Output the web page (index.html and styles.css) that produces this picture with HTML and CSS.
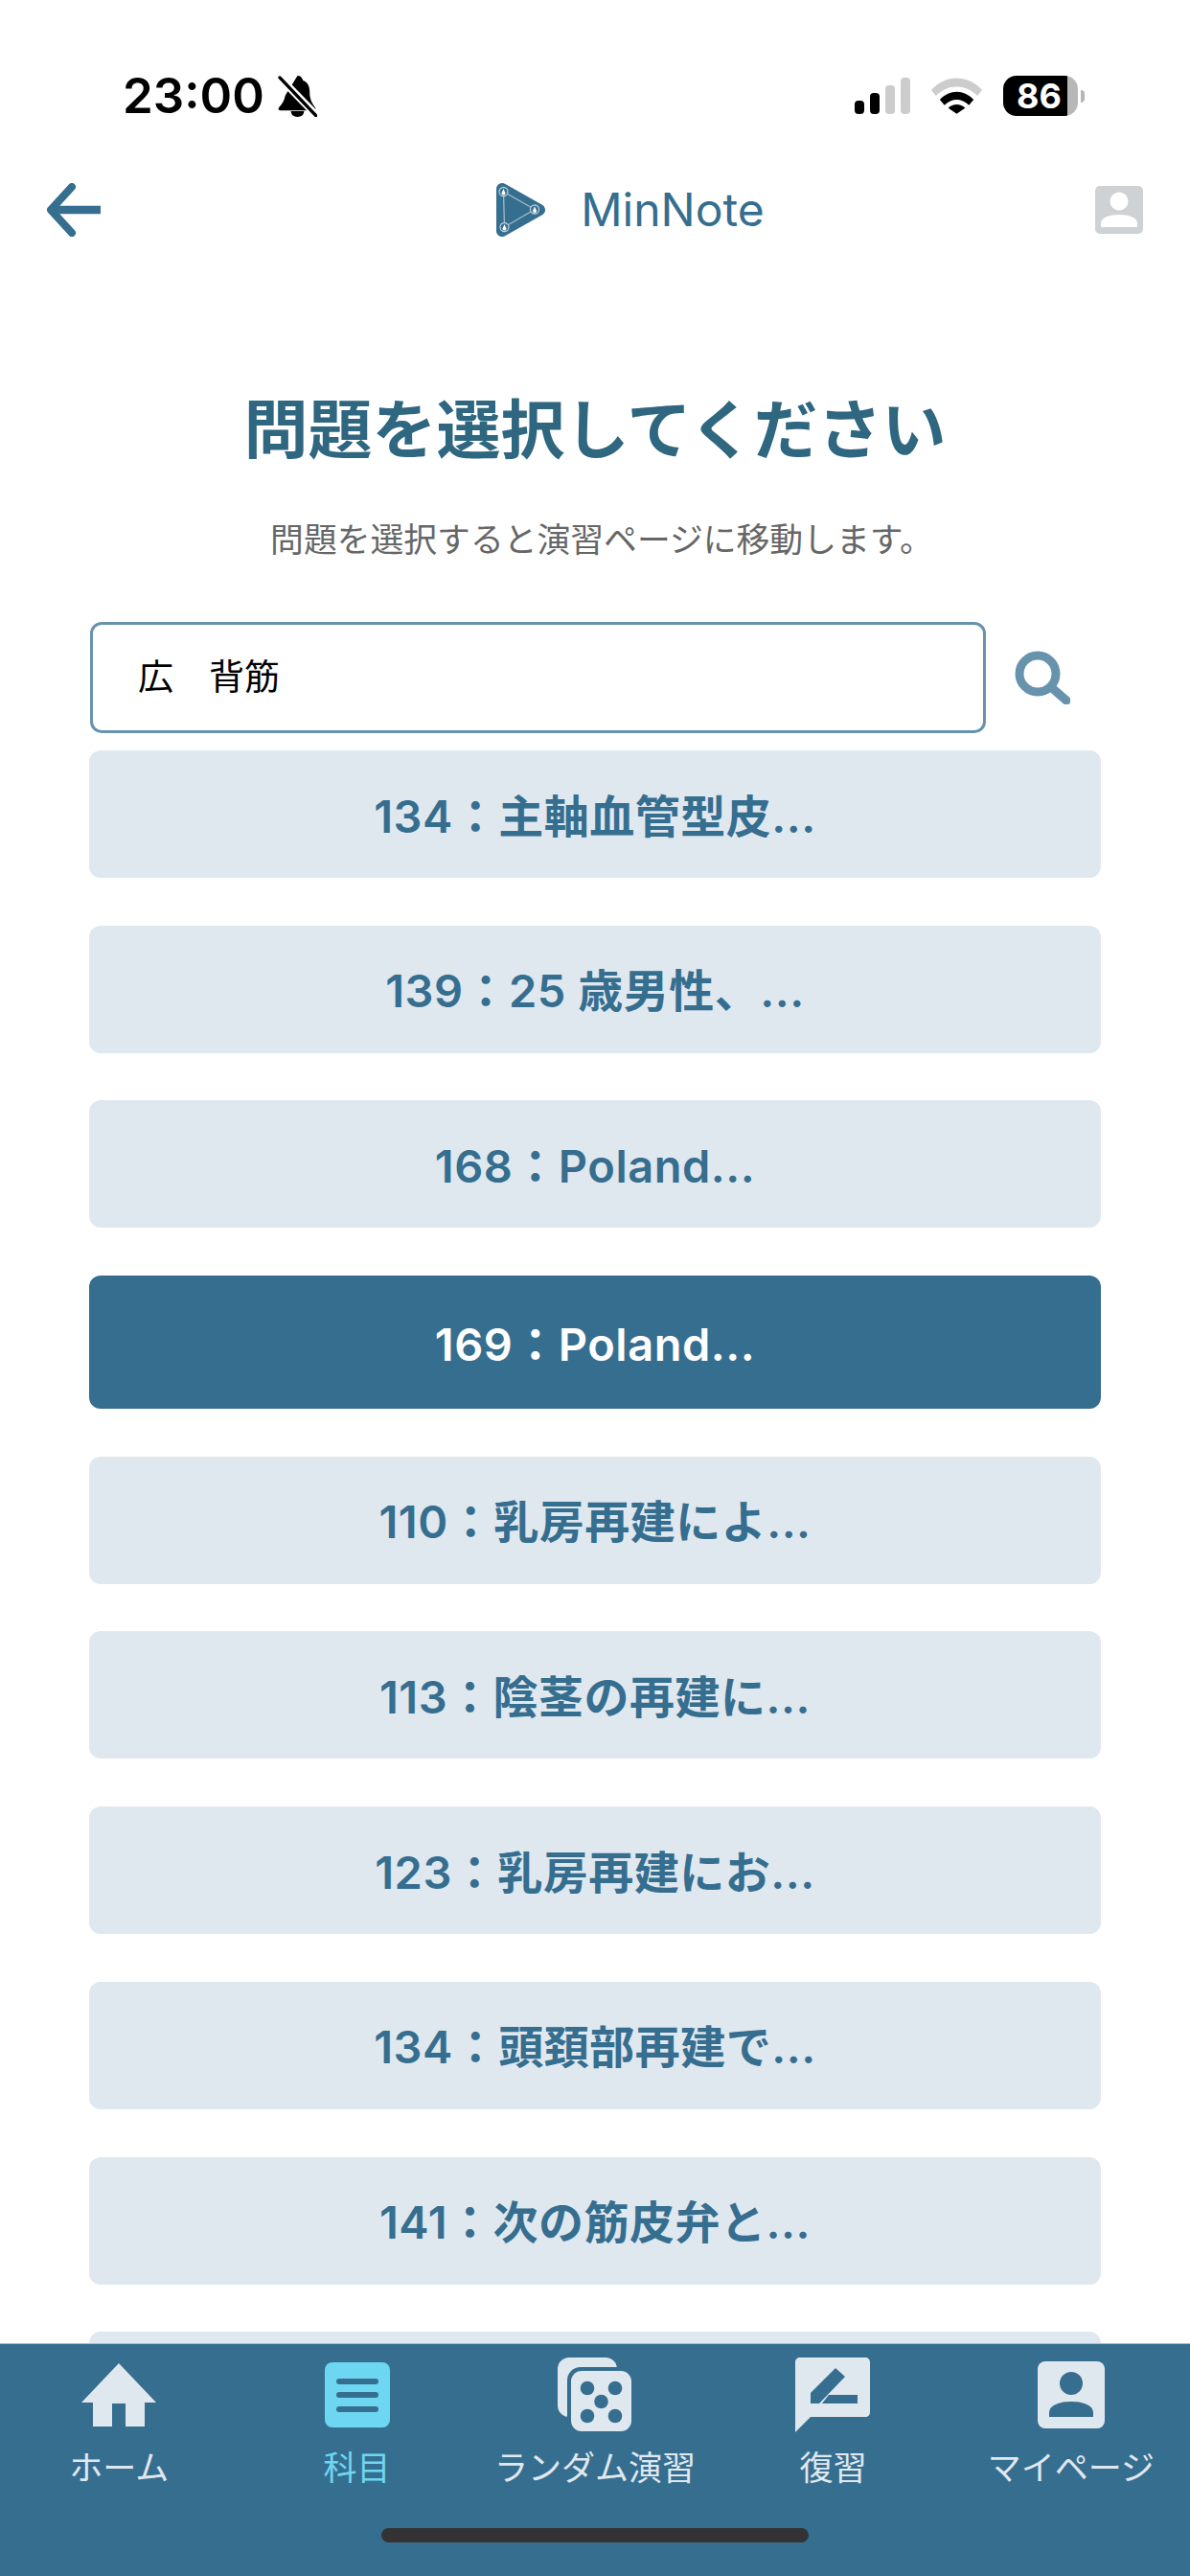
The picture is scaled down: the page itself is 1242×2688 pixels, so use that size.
FILE: index.html
```html
<!DOCTYPE html>
<html lang="ja">
<head>
    <meta charset="UTF-8">
    <meta name="viewport" content="width=device-width, initial-scale=1.0">
    <title>MinNote - 問題選択</title>
    <link rel="stylesheet" href="styles.css">
</head>
<body>
    <div class="status-bar">
        <div class="status-left">
            <span class="clock">23:00</span>
            <svg class="bell" viewBox="0 0 42 44">
                <path d="M21 0c3 0 5 2 6 5 5 2 7 6 7 12 0 6 1 11 6 17 1 2 0 3-2 3H3c-2 0-3-1-2-3 4-4 6-8 7-13z" fill="#000"/>
                <path d="M14 38h14c0 4-3 6-7 6s-7-2-7-6z" fill="#000"/>
                <path d="M1 1l41 42" stroke="#fff" stroke-width="8"/>
                <path d="M2 2l39 41" stroke="#000" stroke-width="3.4" stroke-linecap="round"/>
            </svg>
        </div>
        <div class="status-right">
            <div class="signal">
                <i class="bar b1"></i><i class="bar b2"></i><i class="bar b3"></i><i class="bar b4"></i>
            </div>
            <svg class="wifi" viewBox="0 0 54 38">
                <path d="M0 13C15-4 39-4 54 13l-5 6C37 6 17 6 5 19z" fill="#ccc"/>
                <path d="M9 23c11-11 25-11 36 0l-5 6c-8-8-18-8-26 0z" fill="#000"/>
                <path d="M18 32c5-5 13-5 18 0l-9 6z" fill="#000"/>
            </svg>
            <div class="battery">
                <div class="battery-body"><span>86</span></div>
                <div class="battery-cap"></div>
            </div>
        </div>
    </div>

    <header class="app-header">
        <svg class="back-icon" viewBox="0 0 56 56">
            <path d="M26 4L4 28l22 24" fill="none" stroke="#366e8f" stroke-width="8" stroke-linecap="round" stroke-linejoin="round"/>
            <path d="M5 28h51" fill="none" stroke="#366e8f" stroke-width="8.5"/>
        </svg>
        <div class="brand">
            <svg class="logo" viewBox="0 0 51 56">
                <path d="M6 6l39 22L6 50z" fill="#366e8f" stroke="#366e8f" stroke-width="12" stroke-linejoin="round"/>
                <path d="M7.500 9L40 27.500 8.500 46z" fill="none" stroke="#9dbccd" stroke-width="1.300"/>
                <circle cx="7.500" cy="9" r="4.500" fill="#366e8f" stroke="#b5cdd9" stroke-width="1.300"/>
                <circle cx="40" cy="27.500" r="4.500" fill="#366e8f" stroke="#b5cdd9" stroke-width="1.300"/>
                <circle cx="8.500" cy="46" r="4.500" fill="#366e8f" stroke="#b5cdd9" stroke-width="1.300"/>
                <path d="M7.500 6l2 4.500a2 2 0 1 1-4 0z" fill="#fff"/>
                <path d="M40 24.500l2 4.500a2 2 0 1 1-4 0z" fill="#fff"/>
                <path d="M8.500 43l2 4.500a2 2 0 1 1-4 0z" fill="#fff"/>
            </svg>
            <span class="brand-name">MinNote</span>
        </div>
        <svg class="profile-icon" viewBox="0 0 50 50">
            <rect width="50" height="50" rx="5" fill="#cfd2d4"/>
            <circle cx="25" cy="16" r="9.500" fill="#fff"/>
            <path d="M6 43v-4c0-6 9-9 19-9s19 3 19 9v4z" fill="#fff"/>
        </svg>
    </header>

    <main class="content">
        <h1 class="page-title">問題を選択してください</h1>
        <p class="page-sub">問題を選択すると演習ページに移動します。</p>

        <div class="search-row">
            <div class="search-box">広　背筋</div>
            <svg class="search-icon" viewBox="0 0 58 56">
                <circle cx="24" cy="24" r="19" fill="none" stroke="#6893ad" stroke-width="9"/>
                <path d="M38 38l16 14" stroke="#6893ad" stroke-width="9" stroke-linecap="round"/>
            </svg>
        </div>

        <div class="question-list">
            <button class="question">134：主軸血管型皮...</button>
            <button class="question">139：25 歳男性、...</button>
            <button class="question">168：Poland...</button>
            <button class="question active">169：Poland...</button>
            <button class="question">110：乳房再建によ...</button>
            <button class="question">113：陰茎の再建に...</button>
            <button class="question">123：乳房再建にお...</button>
            <button class="question">134：頭頚部再建で...</button>
            <button class="question">141：次の筋皮弁と...</button>
            <button class="question"></button>
        </div>
    </main>

    <nav class="tabbar">
        <div class="tabs">
            <div class="tab">
                <svg class="tab-icon" width="78" height="66" viewBox="0 0 78 66">
                    <path d="M39 0l39 41H66v25H46V42H32v24H12V41H0z" fill="#e0e8ef"/>
                </svg>
                <span>ホーム</span>
            </div>
            <div class="tab current">
                <svg class="tab-icon" width="68" height="68" viewBox="0 0 68 68">
                    <rect width="68" height="68" rx="8" fill="#6dd7f2"/>
                    <path d="M15 20h38M15 34h38M15 49h38" stroke="#366e8f" stroke-width="6" stroke-linecap="round"/>
                </svg>
                <span>科目</span>
            </div>
            <div class="tab">
                <svg class="tab-icon" width="78" height="78" viewBox="0 0 78 78">
                    <rect width="62" height="62" rx="12" fill="#e0e8ef"/>
                    <rect x="10" y="10" width="68" height="68" rx="14" fill="#366e8f"/>
                    <rect x="14" y="14" width="63" height="63" rx="11" fill="#e0e8ef"/>
                    <circle cx="31" cy="32" r="7.300" fill="#366e8f"/>
                    <circle cx="60" cy="32" r="7.300" fill="#366e8f"/>
                    <circle cx="45.500" cy="46" r="7.300" fill="#366e8f"/>
                    <circle cx="31" cy="61" r="7.300" fill="#366e8f"/>
                    <circle cx="60" cy="61" r="7.300" fill="#366e8f"/>
                </svg>
                <span>ランダム演習</span>
            </div>
            <div class="tab">
                <svg class="tab-icon" width="78" height="78" viewBox="0 0 78 78">
                    <path d="M5 0h68c3 0 5 2 5 5v52c0 3-2 5-5 5H16L0 78V5c0-3 2-5 5-5z" fill="#e0e8ef"/>
                    <path d="M42 11l10 9-27 28H16V37z" fill="#366e8f"/>
                    <path d="M35 39h30v9H28z" fill="#366e8f"/>
                </svg>
                <span>復習</span>
            </div>
            <div class="tab">
                <svg class="tab-icon" width="70" height="70" viewBox="0 0 70 70">
                    <rect width="70" height="70" rx="8" fill="#e0e8ef"/>
                    <ellipse cx="35" cy="23" rx="12" ry="12" fill="#366e8f"/>
                    <path d="M12 58v-4c0-9 12-12 23-12s23 3 23 12v4z" fill="#366e8f"/>
                </svg>
                <span>マイページ</span>
            </div>
        </div>
        <div class="home-indicator"></div>
    </nav>
</body>
</html>
```

FILE: styles.css
```css
* {
    margin: 0;
    padding: 0;
    box-sizing: border-box;
}

body {
    width: 1242px;
    height: 2688px;
    display: flex;
    flex-direction: column;
    overflow: hidden;
    background: #fff;
    font-family: Inter, "Noto Sans CJK JP", sans-serif;
    color: #366e8f;
}

/* Status bar */
.status-bar {
    height: 120px;
    padding: 79px 110px 0 128px;
    display: flex;
    justify-content: space-between;
    flex-shrink: 0;
}

.status-left {
    display: flex;
    align-items: center;
    gap: 14px;
    height: 42px;
}

.clock {
    font-size: 51px;
    font-weight: 600;
    color: #000;
    line-height: 42px;
}

.bell {
    width: 41px;
    height: 43px;
}

.status-right {
    display: flex;
    align-items: center;
    gap: 22px;
    height: 42px;
}

.signal {
    display: flex;
    align-items: flex-end;
    gap: 6px;
    height: 38px;
}

.bar {
    width: 10px;
    border-radius: 4px;
    background: #000;
}

.b1 { height: 14px; }
.b2 { height: 22px; }
.b3 { height: 30px; background: #ccc; }
.b4 { height: 38px; background: #ccc; }

.wifi {
    width: 53px;
    height: 38px;
}

.battery {
    display: flex;
    align-items: center;
    gap: 3px;
}

.battery-body {
    width: 78px;
    height: 42px;
    border-radius: 14px;
    background: linear-gradient(90deg, #000 86%, #b7b7b7 86%);
    color: #fff;
    font-size: 36px;
    font-weight: 700;
    line-height: 42px;
    padding-left: 14px;
}

.battery-cap {
    width: 4px;
    height: 13px;
    border-radius: 0 4px 4px 0;
    background: #b7b7b7;
}

/* Header */
.app-header {
    height: 75px;
    margin-top: 61px;
    padding: 0 49px;
    display: flex;
    align-items: center;
    justify-content: space-between;
    flex-shrink: 0;
}

.back-icon {
    width: 56px;
    height: 56px;
}

.brand {
    display: flex;
    align-items: center;
    gap: 37px;
    margin-left: 68px;
}

.logo {
    width: 51px;
    height: 56px;
}

.brand-name {
    font-size: 48px;
    color: #366e8f;
}

.profile-icon {
    width: 50px;
    height: 50px;
}

/* Content */
.content {
    flex: 1;
    min-height: 0;
    overflow: hidden;
    padding: 0 93px;
}

.page-title {
    margin-top: 153px;
    font-size: 67px;
    line-height: 80px;
    font-weight: 700;
    text-align: center;
    color: #2f6680;
}

.page-sub {
    margin-top: 50px;
    padding-left: 14px;
    font-size: 34.800px;
    line-height: 48px;
    text-align: center;
    color: #666;
}

.search-row {
    margin-top: 62px;
    display: flex;
    align-items: center;
    gap: 30px;
}

.search-box {
    width: 935px;
    height: 116px;
    margin-left: 1px;
    border: 3px solid #6893ad;
    border-radius: 12px;
    padding-left: 47px;
    font-size: 37px;
    line-height: 110px;
    color: #000;
}

.search-icon {
    width: 58px;
    height: 56px;
}

.question-list {
    margin-top: 18px;
    display: flex;
    flex-direction: column;
    gap: 49.700px;
}

.question {
    height: 133px;
    flex-shrink: 0;
    border: none;
    border-radius: 12px;
    background: #e0e8ef;
    color: #366e8f;
    padding-bottom: 3px;
    font-family: inherit;
    font-size: 47px;
    font-weight: 600;
    letter-spacing: 0.500px;
}

.question.active {
    height: 139px;
    background: #366e8f;
    color: #fff;
}

/* Bottom tabs */
.tabbar {
    height: 243px;
    flex-shrink: 0;
    background: #366e8f;
    border-top: 1px solid #a9bfcc;
    display: flex;
    flex-direction: column;
    align-items: center;
}

.tabs {
    width: 100%;
    display: grid;
    grid-template-columns: repeat(5, 1fr);
    padding-top: 13px;
}

.tab {
    display: flex;
    flex-direction: column;
    align-items: center;
    color: #e0e8ef;
    font-size: 35px;
    line-height: 50px;
    white-space: nowrap;
}

.tab-icon {
    height: 80px;
    margin-bottom: 11px;
}

.tab.current {
    color: #6dd7f2;
}

.home-indicator {
    width: 446px;
    height: 15px;
    margin-top: 38px;
    border-radius: 8px;
    background: #333;
}
```
